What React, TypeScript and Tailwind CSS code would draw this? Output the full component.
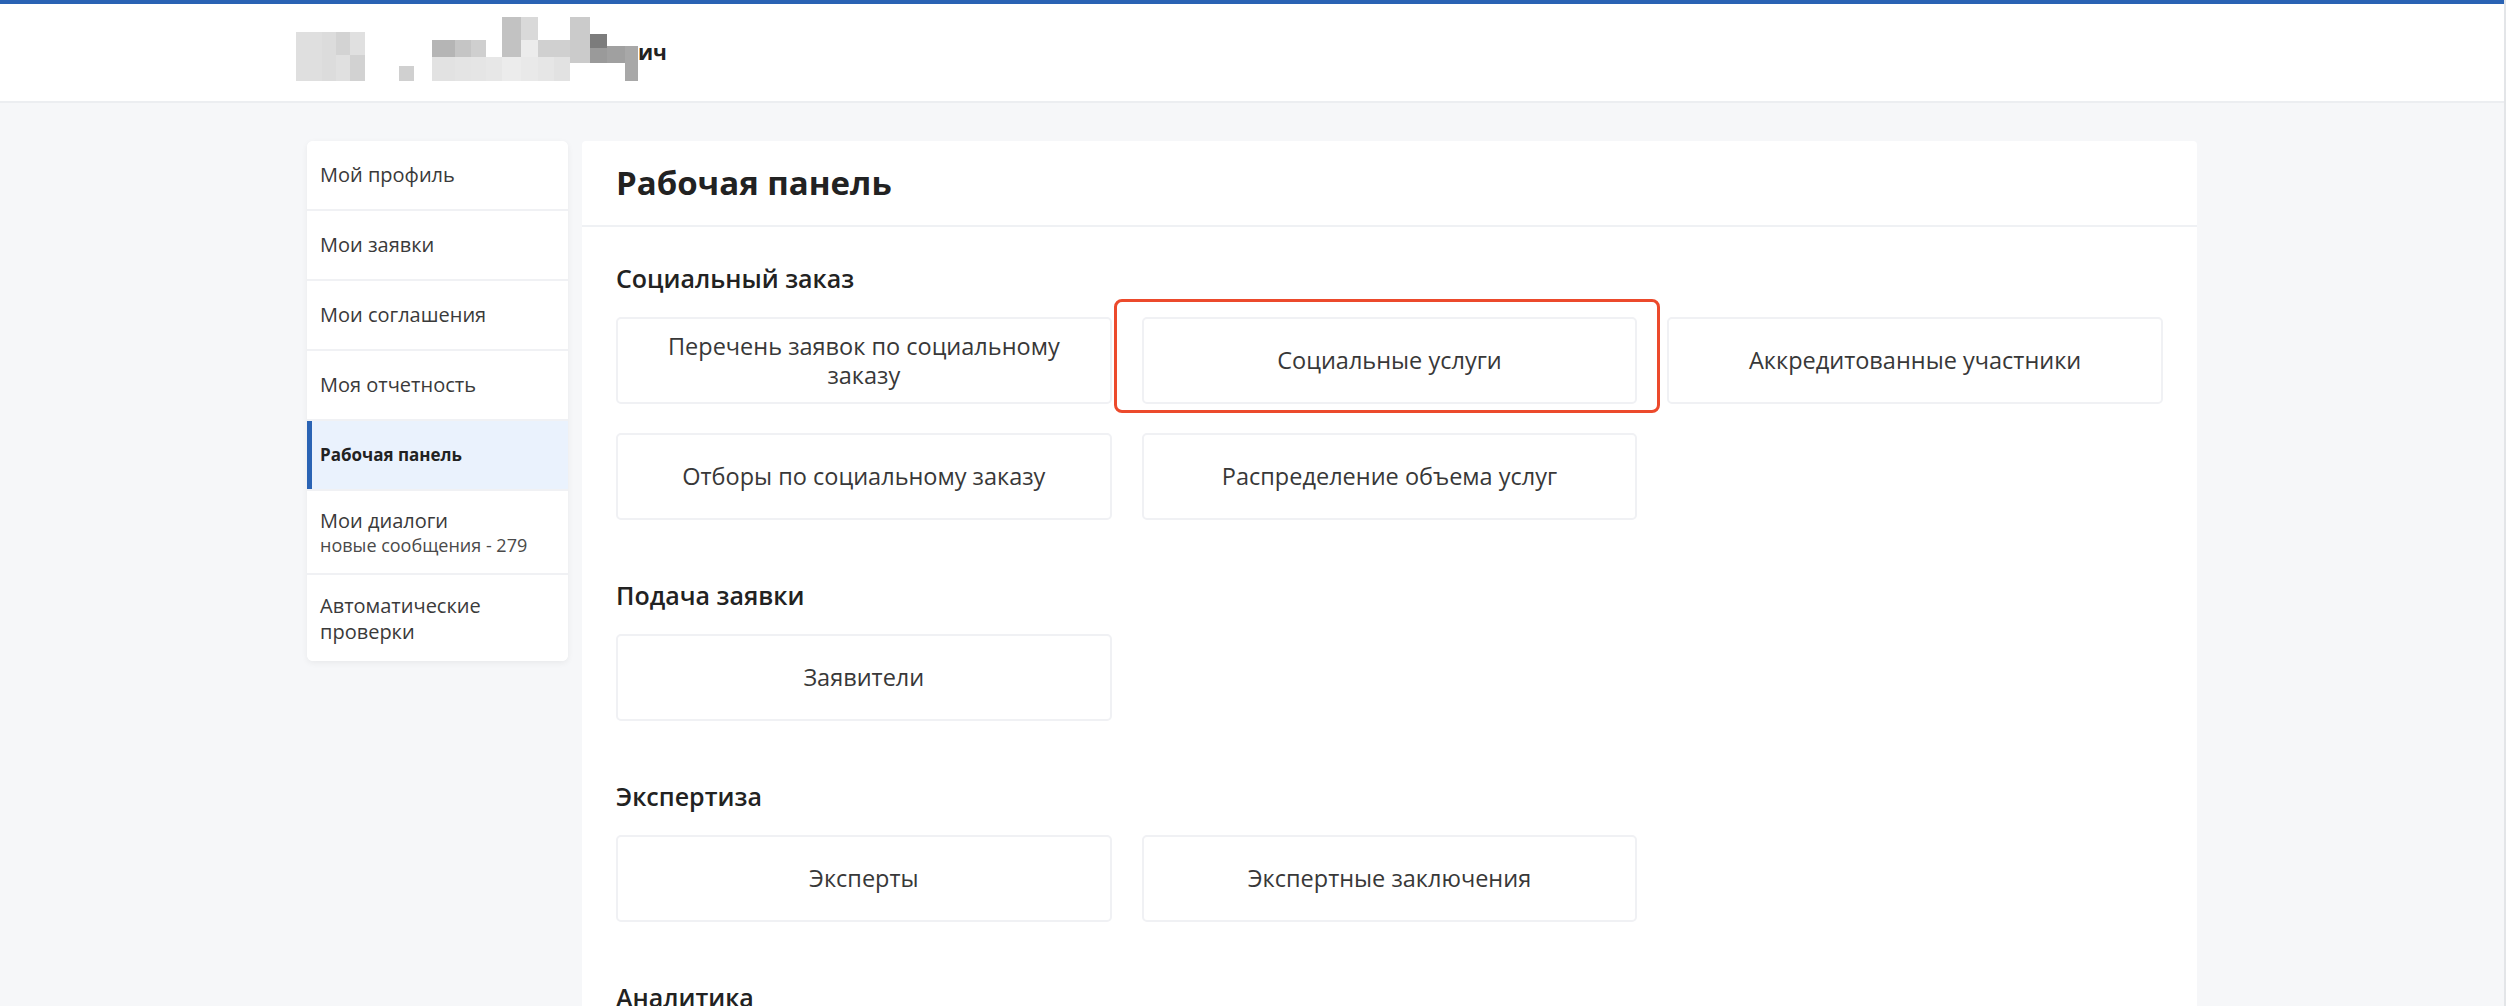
import React from 'react';

const menu = [
  { label: 'Мой профиль' },
  { label: 'Мои заявки' },
  { label: 'Мои соглашения' },
  { label: 'Моя отчетность' },
  { label: 'Рабочая панель', active: true },
  { label: 'Мои диалоги', sub: 'новые сообщения - 279' },
  { label: 'Автоматические проверки' },
];

const sections = [
  {
    title: 'Социальный заказ',
    cards: [
      'Перечень заявок по социальному заказу',
      'Социальные услуги',
      'Аккредитованные участники',
      'Отборы по социальному заказу',
      'Распределение объема услуг',
    ],
  },
  { title: 'Подача заявки', cards: ['Заявители'] },
  { title: 'Экспертиза', cards: ['Эксперты', 'Экспертные заключения'] },
  { title: 'Аналитика', cards: [] },
];

// pixelated (censored) part of the user name
function NameMosaic() {
  const blocks: [number, number, number, number, string][] = [
    [0, 15, 26, 49, '#dfdfdf'],
    [26, 15, 14, 49, '#dcdcdc'],
    [40, 15, 14, 23, '#d3d3d3'],
    [40, 38, 14, 26, '#e0e0e0'],
    [54, 15, 15, 23, '#e0e0e0'],
    [54, 38, 15, 26, '#d2d2d2'],
    [103, 49, 15, 15, '#d0d0d0'],
    [136, 23, 23, 17, '#b5b5b5'],
    [136, 40, 23, 24, '#e2e2e2'],
    [159, 23, 16, 17, '#c5c5c5'],
    [159, 40, 16, 24, '#e4e4e4'],
    [175, 23, 15, 17, '#cfcfcf'],
    [175, 40, 15, 24, '#e5e5e5'],
    [190, 40, 16, 24, '#e7e7e7'],
    [206, 0, 19, 40, '#c2c2c2'],
    [206, 40, 19, 24, '#ececec'],
    [225, 0, 17, 23, '#d9d9d9'],
    [225, 23, 17, 17, '#ececec'],
    [225, 40, 17, 24, '#e9e9e9'],
    [242, 23, 16, 17, '#d0d0d0'],
    [242, 40, 16, 24, '#e6e6e6'],
    [258, 23, 16, 17, '#d0d0d0'],
    [258, 40, 16, 24, '#e2e2e2'],
    [274, 0, 20, 46, '#cbcbcb'],
    [294, 17, 17, 14, '#7c7c7c'],
    [294, 31, 17, 15, '#9a9a9a'],
    [311, 29, 18, 17, '#a0a0a0'],
    [329, 29, 13, 35, '#a8a8a8'],
  ];
  return (
    <svg width="342" height="64" viewBox="0 0 342 64" className="block">
      {blocks.map(([x, y, w, h, c], i) => (
        <rect key={i} x={x} y={y} width={w} height={h} fill={c} />
      ))}
    </svg>
  );
}

function Card({ text }: { text: string }) {
  return (
    <div className="flex h-[87px] items-center justify-center rounded-[5px] border-2 border-[#f0f1f4] bg-white px-6 text-center text-[23.5px] leading-[29px] text-[#383838]">
      {text}
    </div>
  );
}

export default function App() {
  return (
    <div
      className="min-h-screen h-[1006px] overflow-hidden border-r-2 border-[#e3e5e8] bg-[#f6f7f9]"
      style={{ fontFamily: '"Open Sans", "Noto Sans", Arial, sans-serif' }}
    >
      <header className="border-t-4 border-[#2a63b4] border-b-2 border-b-[#eceef1] bg-white">
        <div className="mx-auto flex h-[97px] w-[1890px] items-start">
          <div className="-ml-[11px] mt-[13px] flex items-end">
            <NameMosaic />
            <span className="mb-[18px] text-[21px] font-bold leading-none text-[#222]">ич</span>
          </div>
        </div>
      </header>

      <div className="mx-auto flex w-[1890px] items-start gap-[14px] pt-[38px]">
        <aside className="w-[261px] shrink-0 overflow-hidden rounded-[6px] bg-white shadow-[0_2px_6px_rgba(0,0,0,0.06)]">
          {menu.map((m, i) => {
            const last = i === menu.length - 1;
            let pad = 'pt-[21px] pb-[21px]';
            if (m.sub) pad = 'pt-[17px] pb-[17px]';
            if (last) pad = 'pt-[18px] pb-[16px]';
            return (
              <div
                key={m.label}
                className={
                  'flex ' +
                  (last ? '' : 'border-b-2 border-[#f0f1f4] ') +
                  (m.active ? 'bg-[#eaf2fd]' : 'bg-white')
                }
              >
                <div className={'w-[5px] shrink-0 ' + (m.active ? 'bg-[#2a63b4]' : '')} />
                <div className={'pl-[8px] pr-4 ' + pad}>
                  <div
                    className={
                      m.active
                        ? 'text-[17px] font-bold leading-[26px] text-[#222]'
                        : 'text-[20px] leading-[26px] text-[#3a3a3a]'
                    }
                  >
                    {m.label}
                  </div>
                  {m.sub && <div className="text-[18px] leading-[22px] text-[#4a4a4a]">{m.sub}</div>}
                </div>
              </div>
            );
          })}
        </aside>

        <main className="min-h-[900px] flex-1 rounded-[4px] bg-white">
          <div className="border-b-2 border-[#eff1f4] px-[34px] py-[24px]">
            <h1 className="text-[33px] font-bold leading-[36px] text-[#222]">Рабочая панель</h1>
          </div>
          <div className="px-[34px] pt-[36px]">
            {sections.map((s) => (
              <section key={s.title} className="mb-[60px]">
                <h2 className="mb-[24px] text-[25px] font-semibold leading-[30px] text-[#222]">{s.title}</h2>
                {s.cards.length > 0 && (
                  <div className="grid grid-cols-3 gap-x-[30px] gap-y-[29px]">
                    {s.cards.map((c) =>
                      c === 'Социальные услуги' ? (
                        <div key={c} className="relative">
                          <Card text={c} />
                          <div className="pointer-events-none absolute -bottom-[9px] -left-[28px] -right-[23px] -top-[18px] rounded-[8px] border-[3px] border-[#ec4a2c]" />
                        </div>
                      ) : (
                        <Card key={c} text={c} />
                      )
                    )}
                  </div>
                )}
              </section>
            ))}
          </div>
        </main>
      </div>
    </div>
  );
}
